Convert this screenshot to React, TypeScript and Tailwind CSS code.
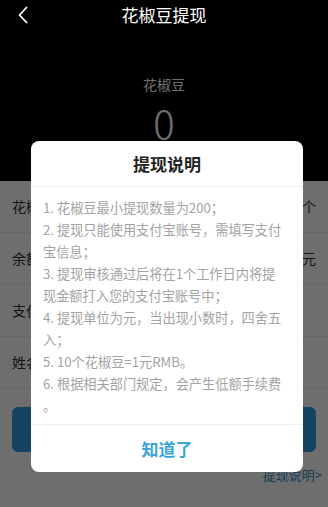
import React from 'react';

// visual lines as they wrap in the dialog
const ruleLines = [
  '1. 花椒豆最小提现数量为200；',
  '2. 提现只能使用支付宝账号，需填写支付',
  '宝信息；',
  '3. 提现审核通过后将在1个工作日内将提',
  '现金额打入您的支付宝账号中；',
  '4. 提现单位为元，当出现小数时，四舍五',
  '入；',
  '5. 10个花椒豆=1元RMB。',
  '6. 根据相关部门规定，会产生低额手续费',
  '。',
];

const rows = [
  { label: '花椒豆', unit: '个' },
  { label: '余额', unit: '元' },
  { label: '支付宝', unit: '' },
  { label: '姓名', unit: '' },
];

const App: React.FC = () => {
  return (
    <div
      className="relative w-[328px] h-[507px] overflow-hidden bg-white"
      style={{ fontFamily: '"Noto Sans CJK SC", "Noto Sans", sans-serif' }}
    >
      {/* header + balance */}
      <div className="h-[181px] bg-black flex flex-col">
        <div className="h-[30px] flex items-center relative z-10">
          <svg className="absolute left-[17px] top-[6px]" width="12" height="18" viewBox="0 0 12 18" fill="none">
            <path d="M9.5 1.5 L2.5 9 L9.5 16.5" stroke="#ffffff" strokeWidth="1.8" strokeLinecap="round" strokeLinejoin="round" />
          </svg>
          <div className="flex-1 text-center text-white text-[17px] leading-[30px]">花椒豆提现</div>
        </div>
        <div className="mt-[44px] text-center text-[14px] leading-[20px] text-white">花椒豆</div>
        <div className="mt-[6px] text-center text-[40px] leading-[44px] font-light text-white">0</div>
      </div>

      {/* form */}
      <div className="flex flex-col">
        {rows.map((r) => (
          <div key={r.label} className="h-[52px] flex items-center justify-between px-3 border-b border-[#eeeeee]">
            <span className="text-[14px] text-[#333333]">{r.label}</span>
            <span className="text-[14px] text-[#333333]">{r.unit}</span>
          </div>
        ))}
        <button className="mt-[18px] mx-3 h-[45px] rounded-md bg-[#2f9fe0] text-white text-[16px]">提现</button>
        <div className="mt-[14px] pr-[6px] text-right text-[13px] leading-[18px] text-[#3a8fc4]">提现说明&gt;</div>
      </div>

      {/* overlay (title bar stays bright) */}
      <div className="absolute inset-x-0 top-[30px] bottom-0 bg-black/[0.57]" />

      {/* dialog */}
      <div className="absolute left-[31px] top-[141px] w-[272px] bg-white rounded-lg overflow-hidden">
        <div className="h-[46px] flex items-center justify-center border-b border-[#eeeeee] text-[17px] font-bold text-[#222222]">
          提现说明
        </div>
        <div className="pt-[10px] pb-[7px] px-3 text-[13.2px] leading-[22px] text-[#a3a3a3] whitespace-nowrap">
          {ruleLines.map((t) => (
            <div key={t}>{t}</div>
          ))}
        </div>
        <div className="h-[48px] border-t border-[#eeeeee] flex items-center justify-center text-[17px] font-semibold text-[#39a5d8]">
          知道了
        </div>
      </div>
    </div>
  );
};

export default App;
